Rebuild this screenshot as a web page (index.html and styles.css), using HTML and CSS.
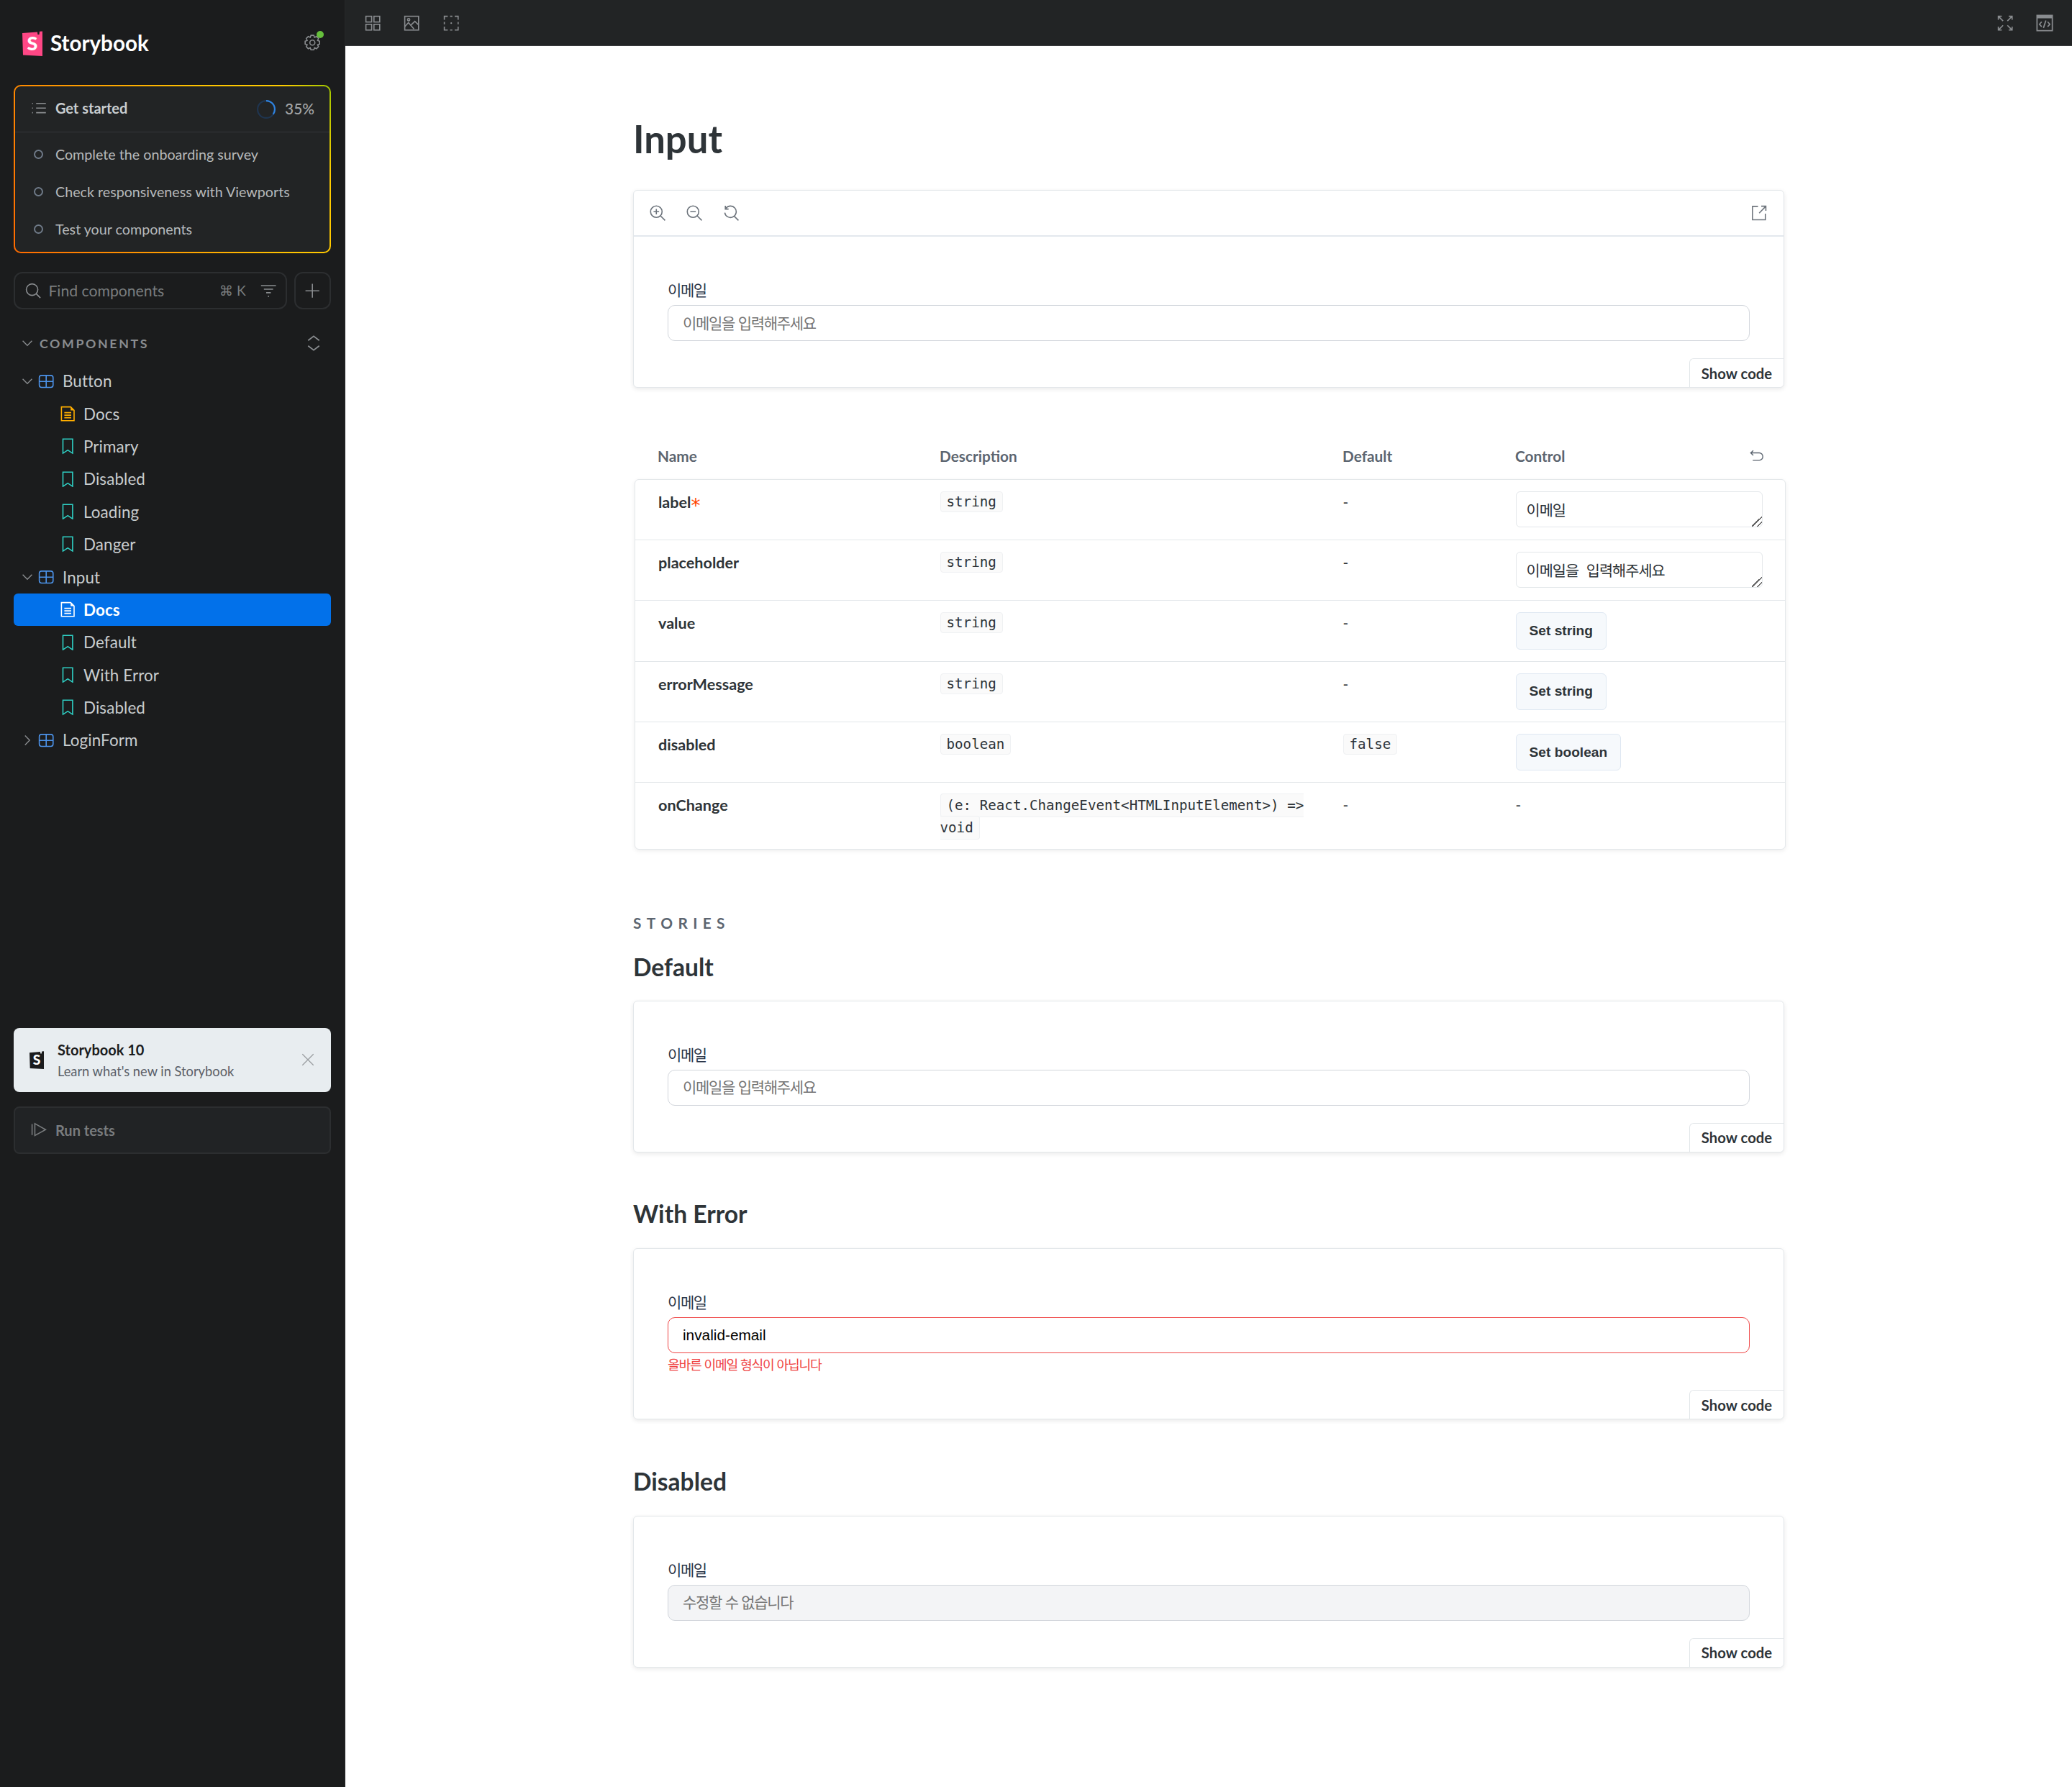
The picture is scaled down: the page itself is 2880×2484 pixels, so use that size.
FILE: index.html
```html
<!DOCTYPE html>
<html lang="ko">
<head>
<meta charset="utf-8">
<title>Input - Docs - Storybook</title>
<link rel="stylesheet" href="styles.css">
</head>
<body>
<svg class="defs" width="0" height="0" aria-hidden="true">
  <symbol id="i-comp" viewBox="0 0 14 14"><rect x="1" y="1.8" width="12" height="10.4" rx="2"/><path d="M7 1.8v10.4M1 7h12"/></symbol>
  <symbol id="i-doc" viewBox="0 0 14 14"><path d="M1.5 1h8l3 3v9h-11zM4 6h6M4 8.2h6M4 10.4h6"/><path class="corner" d="M9.5 1l3 3h-3z"/></symbol>
  <symbol id="i-book" viewBox="0 0 14 14"><path d="M2.8 .8h8.4v12.4L7 10.4l-4.2 2.8z"/></symbol>
  <symbol id="i-down" viewBox="0 0 14 14"><path d="M2 4.5l5 5 5-5"/></symbol>
  <symbol id="i-right" viewBox="0 0 14 14"><path d="M4.5 2l5 5-5 5"/></symbol>
  <symbol id="i-mag" viewBox="0 0 14 14"><circle cx="6" cy="6" r="5"/><path d="M9.6 9.6l3.6 3.6"/></symbol>
</svg>

<div class="app">
  <aside class="sidebar">
    <header class="brand">
      <svg class="logo" viewBox="0 0 28 35"><path class="logo-shape" d="M0 3L21 1.4 21.3 5 23.5 5 24 .8 28 .4 28 35 1 33.6z"/><text class="logo-s" x="14" y="27" text-anchor="middle">S</text></svg>
      <span class="brand-name">Storybook</span>
      <span class="settings">
        <svg class="ic-22 ic-muted" viewBox="0 0 14 14"><polygon points="13.28,5.78 13.28,8.22 11.53,8.88 12.31,10.58 10.58,12.31 8.88,11.53 8.22,13.28 5.78,13.28 5.12,11.53 3.42,12.31 1.69,10.58 2.47,8.88 .72,8.22 .72,5.78 2.47,5.12 1.69,3.42 3.42,1.69 5.12,2.47 5.78,.72 8.22,.72 8.88,2.47 10.58,1.69 12.31,3.42 11.53,5.12"/><circle cx="7" cy="7" r="2.2"/></svg>
        <i class="dot"></i>
      </span>
    </header>

    <section class="guide">
      <div class="guide-head">
        <svg class="ic-22 ic-muted" viewBox="0 0 14 14"><path d="M4.5 3h8.5M4.5 7h8.5M4.5 11h8.5M1 3h.8M1 7h.8M1 11h.8"/></svg>
        <strong class="guide-title">Get started</strong>
        <svg class="ring" viewBox="0 0 24 24"><circle class="ring-track" cx="12" cy="12" r="11"/><circle class="ring-fill" cx="12" cy="12" r="11" pathLength="100"/></svg>
        <span class="guide-pct">35%</span>
      </div>
      <ul class="guide-list">
        <li class="guide-item"><i class="bullet"></i>Complete the onboarding survey</li>
        <li class="guide-item"><i class="bullet"></i>Check responsiveness with Viewports</li>
        <li class="guide-item"><i class="bullet"></i>Test your components</li>
      </ul>
    </section>

    <div class="search-row">
      <div class="search">
        <svg class="ic-22 ic-muted"><use href="#i-mag"/></svg>
        <span class="search-text">Find components</span>
        <span class="kbd"><span class="cmd">⌘</span> K</span>
        <svg class="ic-22 ic-muted" viewBox="0 0 14 14"><path d="M.5 2.5h13M3 5.6h8M5 8.7h4M6.5 11.8h1"/></svg>
      </div>
      <div class="add">
        <svg class="ic-22 ic-muted" viewBox="0 0 14 14"><path d="M7 1v12M1 7h12"/></svg>
      </div>
    </div>

    <div class="section-head">
      <svg class="chev"><use href="#i-down"/></svg>
      <span class="section-name">COMPONENTS</span>
      <svg class="ic-24 ic-muted" viewBox="0 0 14 14"><path d="M2.5 4.8L7 1.3l4.5 3.5M2.5 9.2L7 12.7l4.5-3.5"/></svg>
    </div>

    <nav class="tree">
      <div class="node"><svg class="chev"><use href="#i-down"/></svg><svg class="ic-comp"><use href="#i-comp"/></svg>Button</div>
      <div class="leaf"><svg class="ic-doc"><use href="#i-doc"/></svg>Docs</div>
      <div class="leaf"><svg class="ic-book"><use href="#i-book"/></svg>Primary</div>
      <div class="leaf"><svg class="ic-book"><use href="#i-book"/></svg>Disabled</div>
      <div class="leaf"><svg class="ic-book"><use href="#i-book"/></svg>Loading</div>
      <div class="leaf"><svg class="ic-book"><use href="#i-book"/></svg>Danger</div>
      <div class="node"><svg class="chev"><use href="#i-down"/></svg><svg class="ic-comp"><use href="#i-comp"/></svg>Input</div>
      <div class="leaf leaf-on"><svg class="ic-doc"><use href="#i-doc"/></svg>Docs</div>
      <div class="leaf"><svg class="ic-book"><use href="#i-book"/></svg>Default</div>
      <div class="leaf"><svg class="ic-book"><use href="#i-book"/></svg>With Error</div>
      <div class="leaf"><svg class="ic-book"><use href="#i-book"/></svg>Disabled</div>
      <div class="node"><svg class="chev"><use href="#i-right"/></svg><svg class="ic-comp"><use href="#i-comp"/></svg>LoginForm</div>
    </nav>

    <div class="notice">
      <svg class="notice-logo" viewBox="0 0 28 35"><path class="logo-shape" d="M0 3L21 1.4 21.3 5 23.5 5 24 .8 28 .4 28 35 1 33.6z"/><text class="logo-s" x="14" y="27" text-anchor="middle">S</text></svg>
      <div class="notice-text">
        <strong class="notice-title">Storybook 10</strong>
        <span class="notice-sub">Learn what's new in Storybook</span>
      </div>
      <svg class="notice-x" viewBox="0 0 14 14"><path d="M1 1l12 12M13 1L1 13"/></svg>
    </div>

    <div class="run">
      <svg class="ic-22 ic-dim" viewBox="0 0 14 14"><path d="M1 2.2v9.6M3.4 1.8v10.4L12.8 7z"/></svg>
      <span class="run-label">Run tests</span>
    </div>
  </aside>

  <main class="main">
    <div class="topbar">
      <svg class="ic-22 ic-top" viewBox="0 0 14 14"><rect x="1" y="1" width="5" height="5"/><rect x="8" y="1" width="5" height="5"/><rect x="1" y="8" width="5" height="5"/><rect x="8" y="8" width="5" height="5"/></svg>
      <svg class="ic-22 ic-top" viewBox="0 0 14 14"><rect x="1" y="1" width="12" height="12"/><circle cx="4.4" cy="4" r="1"/><path d="M1 10l3.2-3.4L9 12M6.5 8.5L9.8 5.4 13 8.5"/></svg>
      <svg class="ic-22 ic-top" viewBox="0 0 14 14"><path class="dash" d="M1 4V1h3M6 1h2M10 1h3v3M13 6v2M13 10v3h-3M8 13H6M4 13H1v-3M1 8V6"/><circle class="pt" cx="7" cy="7" r=".7"/></svg>
      <span class="grow"></span>
      <svg class="ic-22 ic-top" viewBox="0 0 14 14"><path d="M1.3 1.3l3.8 3.8M12.7 1.3L8.9 5.1M1.3 12.7l3.8-3.8M12.7 12.7L8.9 8.9M1 4V1h3M10 1h3v3M1 10v3h3M10 13h3v-3"/></svg>
      <svg class="ic-24 ic-top" viewBox="0 0 14 14"><rect x=".8" y=".8" width="12.4" height="12.4"/><path class="bar" d="M.8 .8h12.4v2.4H.8z"/><path d="M4.6 6L2.8 8l1.8 2M9.4 6l1.8 2-1.8 2M8 5l-2 6"/></svg>
    </div>

    <div class="docs">
      <h1 class="title">Input</h1>

      <div class="story">
        <div class="tools">
          <svg class="ic-22 ic-tool" viewBox="0 0 14 14"><circle cx="5.8" cy="5.8" r="5"/><path d="M9.4 9.4l4 4M5.8 3.4v4.8M3.4 5.8h4.8"/></svg>
          <svg class="ic-22 ic-tool" viewBox="0 0 14 14"><circle cx="5.8" cy="5.8" r="5"/><path d="M9.4 9.4l4 4M3.4 5.8h4.8"/></svg>
          <svg class="ic-22 ic-tool" viewBox="0 0 14 14"><path d="M2.2 3.2A5 5 0 1 1 1.5 6.6M2 .7v2.8h2.8M9.6 9.6l3.8 3.8"/></svg>
          <span class="grow"></span>
          <svg class="ic-22 ic-tool" viewBox="0 0 14 14"><path d="M6 1.2H1.2v11.6h11.2V7.5M7 7l5.8-6M8.8 1h4v4"/></svg>
        </div>
        <div class="canvas">
          <label class="field">
            <span class="field-label">이메일</span>
            <input class="field-input" type="text" placeholder="이메일을 입력해주세요">
          </label>
          <button class="show-code" type="button">Show code</button>
        </div>
      </div>

      <div class="args">
        <div class="args-head">
          <span>Name</span><span>Description</span><span>Default</span>
          <span class="args-control">Control
            <svg class="ic-undo" viewBox="0 0 14 14"><path d="M3.5 .8L1 3.2l2.5 2.4M1 3.2h8.2a3.6 3.6 0 0 1 0 7.2H3"/></svg>
          </span>
        </div>
        <div class="args-box">
          <div class="arg">
            <span class="arg-name">label<span class="req">*</span></span>
            <span><code class="code">string</code></span>
            <span class="dash-cell">-</span>
            <textarea class="ctl-text" rows="1">이메일</textarea>
          </div>
          <div class="arg">
            <span class="arg-name">placeholder</span>
            <span><code class="code">string</code></span>
            <span class="dash-cell">-</span>
            <textarea class="ctl-text" rows="1">이메일을 입력해주세요</textarea>
          </div>
          <div class="arg">
            <span class="arg-name">value</span>
            <span><code class="code">string</code></span>
            <span class="dash-cell">-</span>
            <span><button class="ctl-btn" type="button">Set string</button></span>
          </div>
          <div class="arg">
            <span class="arg-name">errorMessage</span>
            <span><code class="code">string</code></span>
            <span class="dash-cell">-</span>
            <span><button class="ctl-btn" type="button">Set string</button></span>
          </div>
          <div class="arg">
            <span class="arg-name">disabled</span>
            <span><code class="code">boolean</code></span>
            <span><code class="code">false</code></span>
            <span><button class="ctl-btn" type="button">Set boolean</button></span>
          </div>
          <div class="arg arg-last">
            <span class="arg-name">onChange</span>
            <span class="arg-wrap"><code class="code code-wrap">(e: React.ChangeEvent&lt;HTMLInputElement&gt;) =&gt; void</code></span>
            <span class="dash-cell">-</span>
            <span class="dash-cell">-</span>
          </div>
        </div>
      </div>

      <div class="stories-label">STORIES</div>

      <h3 class="story-title story-title-first">Default</h3>
      <div class="story">
        <div class="canvas">
          <label class="field">
            <span class="field-label">이메일</span>
            <input class="field-input" type="text" placeholder="이메일을 입력해주세요">
          </label>
          <button class="show-code" type="button">Show code</button>
        </div>
      </div>

      <h3 class="story-title">With Error</h3>
      <div class="story">
        <div class="canvas">
          <label class="field">
            <span class="field-label">이메일</span>
            <input class="field-input field-error" type="text" value="invalid-email">
            <span class="error-text">올바른 이메일 형식이 아닙니다</span>
          </label>
          <button class="show-code" type="button">Show code</button>
        </div>
      </div>

      <h3 class="story-title">Disabled</h3>
      <div class="story">
        <div class="canvas">
          <label class="field">
            <span class="field-label">이메일</span>
            <input class="field-input" type="text" placeholder="수정할 수 없습니다" disabled>
          </label>
          <button class="show-code" type="button">Show code</button>
        </div>
      </div>
    </div>
  </main>
</div>
</body>
</html>
```

FILE: styles.css
```css
* { box-sizing: border-box; }
html, body { margin: 0; padding: 0; }
body {
  background: #fff;
  color: #2e3438;
  font-family: "Lato", "Noto Sans", "Noto Sans CJK KR", sans-serif;
}
svg { fill: none; stroke: currentColor; stroke-width: 1; flex: none; display: block; }
.defs { position: absolute; }
ul { list-style: none; margin: 0; padding: 0; }
.grow { flex: 1; }

.app { display: grid; grid-template-columns: 480px 1fr; min-height: 2484px; }

/* ---------- sidebar ---------- */
.sidebar {
  background: #1b1c1d;
  border-right: 1px solid #26282a;
  padding: 0 19px 0 19px;
  color: #c9cdcf;
  display: flex;
  flex-direction: column;
}
.ic-22 { width: 22.4px; height: 22.4px; }
.ic-24 { width: 24px; height: 24px; }
.ic-muted { color: #8a8d90; }
.ic-dim { color: #797c7e; }

.brand { height: 118px; display: flex; align-items: center; padding: 0 12px; }
.logo { width: 28px; height: 35px; stroke: none; margin-top: 2px; }
.logo-shape { fill: #ff4785; stroke: none; }
.logo-s { fill: #fff; stroke: none; font: 900 27px "Lato", sans-serif; }
.corner { fill: currentColor; stroke: none; }
.brand-name { margin-left: 11px; font-size: 29.6px; font-weight: 700; color: #fff; }
.settings { margin-left: auto; margin-right: 3px; position: relative; }
.dot { position: absolute; top: -5px; right: -5px; width: 10px; height: 10px; border-radius: 50%; background: #66bf3c; }

.guide {
  height: 234px;
  border: 2px solid transparent;
  border-radius: 10px;
  background:
    linear-gradient(#222425, #222425) padding-box,
    linear-gradient(62deg, #ff6a00 0%, #ff9a00 35%, #ffc400 68%, #ffcc00 88%, #9fc800 100%) border-box;
}
.guide-head {
  height: 64px;
  display: flex;
  align-items: center;
  padding: 0 21px 3px 22px;
  border-bottom: 1px solid #34363a;
}
.guide-title { margin-left: 11.5px; font-size: 20px; font-weight: 700; color: #c9cdcf; }
.ring { width: 26px; height: 26px; margin-left: auto; margin-top: 3px; }
.ring-track { stroke: #1f3550; stroke-width: 2; }
.ring-fill { stroke: #2f82de; stroke-width: 2; stroke-dasharray: 35 100; transform: rotate(-90deg); transform-origin: center; }
.guide-pct { margin-left: 13px; font-size: 20.8px; color: #a3a6a8; font-weight: 500; }
.guide-list { padding: 5px 0; }
.guide-item { height: 51.7px; display: flex; align-items: center; padding-left: 26px; font-size: 19.7px; color: #b6b9bb; }
.bullet { width: 13px; height: 13px; border: 2px solid #6f7a88; border-radius: 50%; margin-right: 17px; flex: none; }

.search-row { display: flex; gap: 10px; margin-top: 26px; height: 52px; }
.search {
  flex: 1;
  display: flex;
  align-items: center;
  padding: 0 13px 0 14px;
  border: 2px solid #2c2e30;
  border-radius: 12px;
  color: #797c7e;
}
.search-text { margin-left: 10px; font-size: 21.2px; }
.kbd { margin-left: auto; margin-right: 20px; font-size: 19.2px; }
.cmd { font-family: "DejaVu Sans", sans-serif; }
.add { width: 51px; display: flex; align-items: center; justify-content: center; border: 2px solid #2c2e30; border-radius: 12px; }

.section-head { height: 46px; margin-top: 24px; display: flex; align-items: center; padding: 0 12px 0 6px; }
.chev { width: 26px; height: 18px; color: #8a8d90; stroke-width: 1.1; }
.section-name { margin-left: 4px; flex: 1; font-size: 17.8px; font-weight: 700; letter-spacing: 2.6px; color: #8a8d90; }

.tree { margin-top: 7px; }
.node, .leaf { height: 45.4px; display: flex; align-items: center; font-size: 22.4px; letter-spacing: .1px; color: #c9cdcf; }
.node { padding-left: 6px; }
.leaf { padding-left: 64px; }
.ic-comp { width: 22.4px; height: 22.4px; color: #4c93ea; margin: 0 11.6px 0 2px; }
.ic-doc { width: 22.4px; height: 22.4px; color: #ffae00; margin-right: 10.6px; }
.ic-book { width: 22.4px; height: 22.4px; color: #2fcfc4; margin-right: 10.6px; }
.leaf-on { background: #0271ea; border-radius: 6px; color: #fff; font-weight: 700; }
.leaf-on .ic-doc { color: #fff; }

.notice {
  margin-top: 377px;
  height: 89px;
  border-radius: 8px;
  background: #e8edf0;
  display: flex;
  align-items: center;
  padding: 0 23px 0 22px;
}
.notice-logo { width: 20px; height: 25px; stroke: none; }
.notice-logo .logo-shape { fill: #1b1c1d; }
.notice-text { margin-left: 19px; display: flex; flex-direction: column; gap: 6px; flex: 1; padding-top: 2px; }
.notice-title { font-size: 20px; font-weight: 700; color: #1b1c1d; line-height: 24px; }
.notice-sub { font-size: 18.3px; color: #5a6068; line-height: 24px; }
.notice-x { width: 18px; height: 18px; color: #9a9da0; }

.run {
  margin-top: 20px;
  height: 66px;
  display: flex;
  align-items: center;
  gap: 11.5px;
  padding: 0 22px;
  border: 2px solid #2c2e30;
  border-radius: 8px;
  background: #212325;
}
.run-label { font-size: 20px; font-weight: 700; color: #797c7e; }

/* ---------- main ---------- */
.main { min-width: 0; background: #fff; }
.topbar {
  height: 64px;
  background: #222425;
  border-bottom: 1px solid #3a3c3e;
  display: flex;
  align-items: center;
  padding: 1px 26px 0 27px;
  gap: 32px;
}
.ic-top { color: #8a8d90; }
.dash { stroke-linecap: butt; }
.pt { fill: currentColor; stroke: none; }
.bar { fill: currentColor; stroke: none; }

.docs { width: 1600px; margin: 0 auto; padding-top: 93px; }
.title { margin: 0 0 35px; font-size: 52.6px; line-height: 72px; font-weight: 700; color: #2e3438; }

.story {
  position: relative;
  border: 1px solid #e3e7ea;
  border-radius: 6px;
  box-shadow: 0 2px 6px rgba(0, 0, 0, .09);
  background: #fff;
}
.tools {
  height: 64px;
  display: flex;
  align-items: center;
  gap: 28.5px;
  padding: 0 23px 0 22px;
  border-bottom: 2px solid #e3e8ee;
}
.ic-tool { color: #6d747c; }
.canvas { padding: 58px 47px 64px; }
.field { display: flex; flex-direction: column; }
.field-label {
  line-height: 30px;
  margin-bottom: 7px;
  font-size: 21px;
  font-weight: 400;
  letter-spacing: -1.4px;
  color: #2b3648;
  font-family: "Noto Sans CJK KR", sans-serif;
}
.field-input {
  height: 50px;
  width: 100%;
  padding: 0 20px 3px;
  border: 1.6px solid #d1d5db;
  border-radius: 10px;
  font-family: "Noto Sans CJK KR", sans-serif;
  font-size: 21px;
  letter-spacing: -1.3px;
  color: #000;
  background: #fff;
  outline: none;
}
.field-input::placeholder { color: #757575; opacity: 1; }
.field-input:disabled { background: #f3f4f6; }
.field-error {
  border-color: #ef4444;
  font-family: "Liberation Sans", sans-serif;
  font-size: 20.8px;
  letter-spacing: 0;
  padding-bottom: 0;
}
.error-text {
  margin-top: 4px;
  line-height: 23px;
  font-family: "Noto Sans CJK KR", sans-serif;
  font-size: 18.2px;
  letter-spacing: -1.2px;
  color: #ef4444;
}
.show-code {
  position: absolute;
  right: 0;
  bottom: 0;
  width: 131px;
  height: 40px;
  padding: 0;
  border: 1px solid #e3e7ea;
  border-width: 1px 0 0 1px;
  border-radius: 6px 0 6px 0;
  background: #fff;
  font: 700 20.3px "Lato", sans-serif;
  color: #2e3438;
}

/* args table */
.args { margin: 0 -2px 0 2px; padding-top: 80px; }
.args-head, .arg { display: grid; }
.args-head {
  height: 47px;
  padding-left: 32px;
  grid-template-columns: 392px 560px 240px 1fr;
  font-size: 20.8px;
  font-weight: 700;
  color: #5c6570;
  line-height: 30px;
}
.args-control { display: flex; align-items: center; justify-content: space-between; padding-right: 30px; height: 30px; }
.ic-undo { width: 20px; height: 20px; color: #5c6570; margin-top: 2px; }
.args-box {
  border: 1px solid #e3e7ea;
  border-radius: 6px;
  box-shadow: 0 2px 6px rgba(0, 0, 0, .07);
  background: #fff;
}
.arg { height: 84.2px; padding-left: 32px; padding-top: 16px; grid-template-columns: 391.5px 560px 240px 1fr; border-bottom: 1px solid #e3e7ea; align-items: start; }
.arg-last { height: 92px; border-bottom: 0; }
.arg-name { font-size: 21.6px; font-weight: 700; color: #2e3438; line-height: 30px; }
.req { color: #ff4400; font-size: 26px; line-height: 20px; font-family: "DejaVu Sans", sans-serif; font-weight: 400; vertical-align: -6px; }
.dash-cell { font-size: 20.8px; line-height: 30px; }
.code {
  display: inline-block;
  padding: 0 8px;
  height: 29px;
  border: 1px solid #eff1f3;
  border-radius: 4px;
  background: #fafafa;
  font: 19.2px/27px "DejaVu Sans Mono", monospace;
  color: #2e3438;
}
.arg-wrap { padding-right: 30px; line-height: 31px; display: block; }
.code-wrap { display: inline; height: auto; padding: 4px 8px; -webkit-box-decoration-break: slice; box-decoration-break: slice; }
.ctl-text {
  display: block;
  width: 343px;
  height: 50px;
  padding: 11px 14px;
  border: 1.6px solid #e3e7ea;
  border-radius: 6px;
  font-family: "Noto Sans CJK KR", sans-serif;
  font-size: 20.8px;
  line-height: 26px;
  letter-spacing: -1px;
  word-spacing: 6px;
  color: #2e3438;
  background: #fff;
  resize: both;
  outline: none;
  overflow: hidden;
}
.ctl-text::-webkit-resizer {
  background: linear-gradient(135deg, transparent 50%, #666 50%, #666 57%, transparent 57%, transparent 75%, #666 75%, #666 82%, transparent 82%);
}
.ctl-btn {
  height: 51.5px;
  padding: 0 18px;
  border: 1.6px solid #dfe8f2;
  border-radius: 6px;
  background: #f6f9fc;
  font: 700 19.2px "Liberation Sans", sans-serif;
  color: #2e3438;
}

.stories-label {
  margin-top: 90px;
  line-height: 24px;
  font-size: 20.8px;
  font-weight: 700;
  letter-spacing: 7.4px;
  color: #5c6570;
}
.story-title { margin: 63.5px 0 26px; font-size: 33.6px; line-height: 44px; font-weight: 700; color: #2e3438; }
.story-title-first { margin: 27px 0 25px; }
```
